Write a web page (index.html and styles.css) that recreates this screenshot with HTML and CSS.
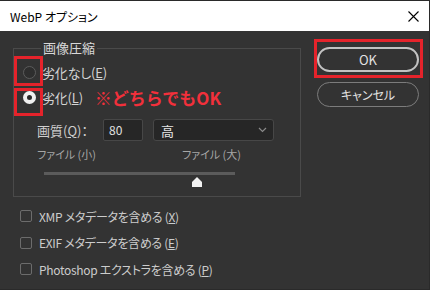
FILE: index.html
```html
<!DOCTYPE html>
<html>
<head>
<meta charset="utf-8">
<title>WebP オプション</title>
<link rel="stylesheet" href="styles.css">
</head>
<body>
  <div class="dialog">
    <div class="titlebar">
      <span class="title">WebP オプション</span>
      <svg class="close" width="11" height="11" viewBox="0 0 11 11">
        <path d="M0.5 0.5 L10.5 10.5 M10.5 0.5 L0.5 10.5" stroke="#000" stroke-width="1.1" fill="none"/>
      </svg>
    </div>

    <div class="content">
      <div class="left">
        <fieldset class="group">
          <legend>画像圧縮</legend>
          <div class="mark mark-r1"></div>
          <div class="mark mark-r2"></div>

          <div class="radio-row">
            <span class="radio"></span>
            <span class="label">劣化なし(<u>E</u>)</span>
          </div>
          <div class="radio-row">
            <span class="radio checked"></span>
            <span class="label">劣化(<u>L</u>)</span>
            <span class="note">※どちらでもOK</span>
          </div>

          <div class="quality-row">
            <span class="q-label">画質(<u>Q</u>)：</span>
            <span class="input">80</span>
            <span class="select">
              <span>高</span>
              <svg width="9" height="6" viewBox="0 0 9 6"><path d="M1 1 L4.5 4.5 L8 1" stroke="#8a8a8a" stroke-width="1.2" fill="none"/></svg>
            </span>
          </div>

          <div class="file-row">
            <span class="file-small">ファイル (小)</span>
            <span>ファイル (大)</span>
          </div>

          <div class="slider">
            <svg class="thumb" style="left: 80%" width="12" height="10" viewBox="0 0 12 10">
              <polygon points="6,0 11,5 11,10 1,10 1,5" fill="#f2f2f2"/>
            </svg>
          </div>
        </fieldset>

        <div class="checks">
          <div class="check-row"><span class="box"></span><span>XMP メタデータを含める (<u>X</u>)</span></div>
          <div class="check-row"><span class="box"></span><span>EXIF メタデータを含める (<u>E</u>)</span></div>
          <div class="check-row"><span class="box"></span><span>Photoshop エクストラを含める (<u>P</u>)</span></div>
        </div>
      </div>

      <div class="buttons">
        <div class="mark mark-ok"></div>
        <div class="btn btn-ok">OK</div>
        <div class="btn btn-cancel">キャンセル</div>
      </div>
    </div>
  </div>
</body>
</html>
```

FILE: styles.css
```css
* {
  box-sizing: border-box;
  font-family: "Noto Sans CJK JP", "Noto Sans", sans-serif;
  font-feature-settings: "palt";
}

body {
  margin: 0;
  background-color: #333333;
}

.dialog {
  width: 430px;
  height: 290px;
  background-color: #333333;
  border: 1px solid #2a2a2a;
  border-left: none;
}

.titlebar {
  height: 30px;
  background-color: #ffffff;
  display: flex;
  align-items: center;
  justify-content: space-between;
  padding: 0 10px 0 10px;
}

.title {
  font-size: 12px;
  color: #000;
}

.close {
  margin-top: 1px;
}

.content {
  display: flex;
  padding-left: 13px;
}

.left {
  width: 288px;
}

/* group box */
.group {
  position: relative;
  margin: 9px 0 0 0;
  padding: 4px 0 0 9px;
  border: 1px solid #4a4a4a;
  height: 157px;
}

.group legend {
  font-size: 13px;
  line-height: 16px;
  color: #d8d8d8;
  margin-left: 18px;
  padding: 0 2px;
}

.radio-row {
  height: 25px;
  display: flex;
  align-items: center;
  font-size: 13px;
  color: #d4d4d4;
}

.radio {
  width: 13px;
  height: 13px;
  border-radius: 50%;
  border: 1px solid #5c5c5c;
  background-color: #2e2e2e;
  margin-right: 6px;
}

.radio.checked {
  border: 4px solid #f0f0f0;
  background-color: #2a2a2a;
}

.label {
  letter-spacing: -0.2px;
}

.note {
  margin-left: 12px;
  font-size: 17px;
  font-weight: bold;
  color: #f2303b;
  font-feature-settings: normal;
}

.quality-row {
  display: flex;
  align-items: center;
  margin: 9px 0 0 14px;
  height: 22px;
  font-size: 13px;
  color: #cfcfcf;
}

.q-label {
  width: 66px;
}

.input {
  width: 40px;
  height: 22px;
  background-color: #262626;
  border: 1px solid #474747;
  border-radius: 2px;
  padding-left: 5px;
  line-height: 20px;
  font-size: 12px;
  color: #e0e0e0;
}

.select {
  width: 121px;
  height: 22px;
  margin-left: 10px;
  display: flex;
  align-items: center;
  justify-content: space-between;
  background-color: #262626;
  border: 1px solid #474747;
  border-radius: 3px;
  padding: 0 6px 0 7px;
  font-size: 13px;
  color: #e4e4e4;
}

.file-row {
  display: flex;
  margin: 6px 0 0 14px;
  font-size: 11px;
  line-height: 14px;
  color: #a6a6a6;
}

.file-small {
  width: 145px;
}

.slider {
  position: relative;
  margin: 11px 0 0 21px;
  width: 191px;
  height: 3px;
  background-color: #5b5b5b;
}

.thumb {
  position: absolute;
  top: 5px;
  margin-left: -6px;
}

/* checkboxes */
.checks {
  padding-top: 6px;
}

.check-row {
  height: 26.5px;
  display: flex;
  align-items: center;
  padding-left: 7px;
  font-size: 12px;
  letter-spacing: -0.3px;
  color: #cccccc;
}

.check-row .box {
  width: 12px;
  height: 12px;
  border: 1px solid #6c6c6c;
  border-radius: 2px;
  margin-right: 7px;
}

/* buttons */
.buttons {
  position: relative;
  margin-left: 16px;
  padding-top: 16px;
  display: flex;
  flex-direction: column;
  gap: 10px;
}

.btn {
  width: 102px;
  height: 25px;
  border-radius: 13px;
  display: flex;
  align-items: center;
  justify-content: center;
  color: #e2e2e2;
}

.btn-ok {
  border: 2px solid #c2c2c2;
  font-size: 13px;
}

.btn-cancel {
  border: 1.5px solid #7c7c7c;
  font-size: 12px;
}

/* red annotation frames */
.mark {
  position: absolute;
  border: 3px solid #e5232b;
}

.mark-r1 {
  left: 0;
  top: 0;
  width: 29px;
  height: 30px;
}

.mark-r2 {
  left: 0;
  top: 32px;
  width: 29px;
  height: 28px;
}

.mark-ok {
  left: -3px;
  top: 8px;
  width: 109px;
  height: 39px;
}
```
